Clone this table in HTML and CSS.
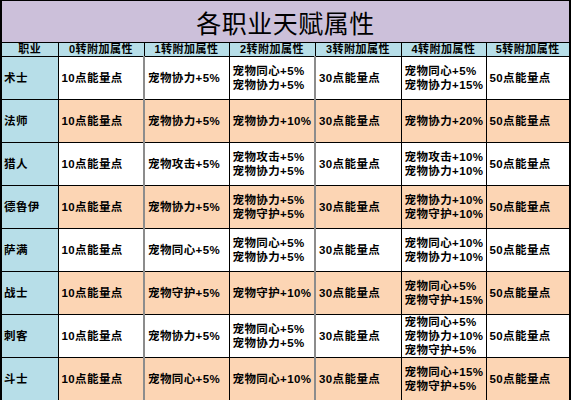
FILE: index.html
```html
<!DOCTYPE html>
<html lang="zh">
<head>
<meta charset="utf-8">
<link rel="stylesheet" href="styles.css">
</head>
<body>
<table class="sheet">
<colgroup>
<col class="c0"><col class="c1"><col class="c2"><col class="c3"><col class="c4"><col class="c5"><col class="c6">
</colgroup>
<thead>
<tr class="title-row"><th colspan="7" class="title">各职业天赋属性</th></tr>
<tr class="head-row">
<th>职业</th><th>0转附加属性</th><th>1转附加属性</th><th>2转附加属性</th><th>3转附加属性</th><th>4转附加属性</th><th>5转附加属性</th>
</tr>
</thead>
<tbody>
<tr class="white">
<td class="job">术士</td><td>10点能量点</td><td class="gl">宠物协力+5%</td><td>宠物同心+5%<br>宠物协力+5%</td><td class="gl">30点能量点</td><td>宠物同心+5%<br>宠物协力+15%</td><td>50点能量点</td>
</tr>
<tr class="peach">
<td class="job">法师</td><td>10点能量点</td><td class="gl">宠物协力+5%</td><td>宠物协力+10%</td><td class="gl">30点能量点</td><td>宠物协力+20%</td><td>50点能量点</td>
</tr>
<tr class="white">
<td class="job">猎人</td><td>10点能量点</td><td class="gl">宠物攻击+5%</td><td>宠物攻击+5%<br>宠物协力+5%</td><td class="gl">30点能量点</td><td>宠物攻击+10%<br>宠物协力+10%</td><td>50点能量点</td>
</tr>
<tr class="peach">
<td class="job">德鲁伊</td><td>10点能量点</td><td class="gl">宠物协力+5%</td><td>宠物协力+5%<br>宠物守护+5%</td><td class="gl">30点能量点</td><td>宠物协力+10%<br>宠物守护+10%</td><td>50点能量点</td>
</tr>
<tr class="white">
<td class="job">萨满</td><td>10点能量点</td><td class="gl">宠物同心+5%</td><td>宠物同心+5%<br>宠物协力+5%</td><td class="gl">30点能量点</td><td>宠物同心+10%<br>宠物协力+10%</td><td>50点能量点</td>
</tr>
<tr class="peach">
<td class="job">战士</td><td>10点能量点</td><td class="gl">宠物守护+5%</td><td>宠物守护+10%</td><td class="gl">30点能量点</td><td>宠物同心+5%<br>宠物守护+15%</td><td>50点能量点</td>
</tr>
<tr class="white">
<td class="job">刺客</td><td>10点能量点</td><td class="gl">宠物协力+5%</td><td>宠物同心+5%<br>宠物协力+5%</td><td class="gl">30点能量点</td><td>宠物同心+5%<br>宠物协力+10%<br>宠物守护+5%</td><td>50点能量点</td>
</tr>
<tr class="peach">
<td class="job">斗士</td><td>10点能量点</td><td class="gl">宠物同心+5%</td><td>宠物同心+10%</td><td class="gl">30点能量点</td><td>宠物同心+15%<br>宠物守护+5%</td><td>50点能量点</td>
</tr>
</tbody>
</table>
</body>
</html>
```
FILE: styles.css
```css
html, body {
  margin: 0;
  padding: 0;
  background: #ffffff;
}

.sheet {
  border-collapse: collapse;
  table-layout: fixed;
  width: 569px;
  font-family: "Liberation Sans", "Noto Sans CJK SC", sans-serif;
  color: #000;
  border-top: 1px solid #000;
  border-left: 2px solid #000;
  border-right: 2px solid #000;
  border-bottom: 2px solid #000;
}

.c0 { width: 57px; }
.c1 { width: 86px; }
.c2 { width: 85px; }
.c3 { width: 86px; }
.c4 { width: 86px; }
.c5 { width: 85px; }
.c6 { width: 84px; }

.title-row { height: 42px; }

.title {
  background: #ccc0da;
  font-family: "Noto Sans CJK SC", sans-serif;
  font-weight: 400;
  font-size: 25px;
  line-height: 28px;
  padding: 0;
  text-align: center;
  border-bottom: 1px solid #000;
  letter-spacing: 0.5px;
}

.head-row { height: 14px; }

.head-row th {
  background: #b7dee8;
  font-size: 11px;
  line-height: 13px;
  font-weight: 700;
  padding: 0;
  text-align: center;
  border: 1px solid #000;
  white-space: nowrap;
  letter-spacing: 0.5px;
}

tbody tr { height: 43px; }

tbody td {
  font-size: 11.5px;
  line-height: 14px;
  font-weight: 700;
  padding: 0 0 0 3px;
  vertical-align: middle;
  text-align: left;
  border: 1px solid #000;
  white-space: nowrap;
  letter-spacing: 0.4px;
}

tbody td.gl {
  border-left: 2px solid #8c8c8c;
}

.white td { background: #ffffff; }
.peach td { background: #fcd5b4; }

tbody td.job {
  background: #b7dee8;
  padding-left: 2px;
}
```
